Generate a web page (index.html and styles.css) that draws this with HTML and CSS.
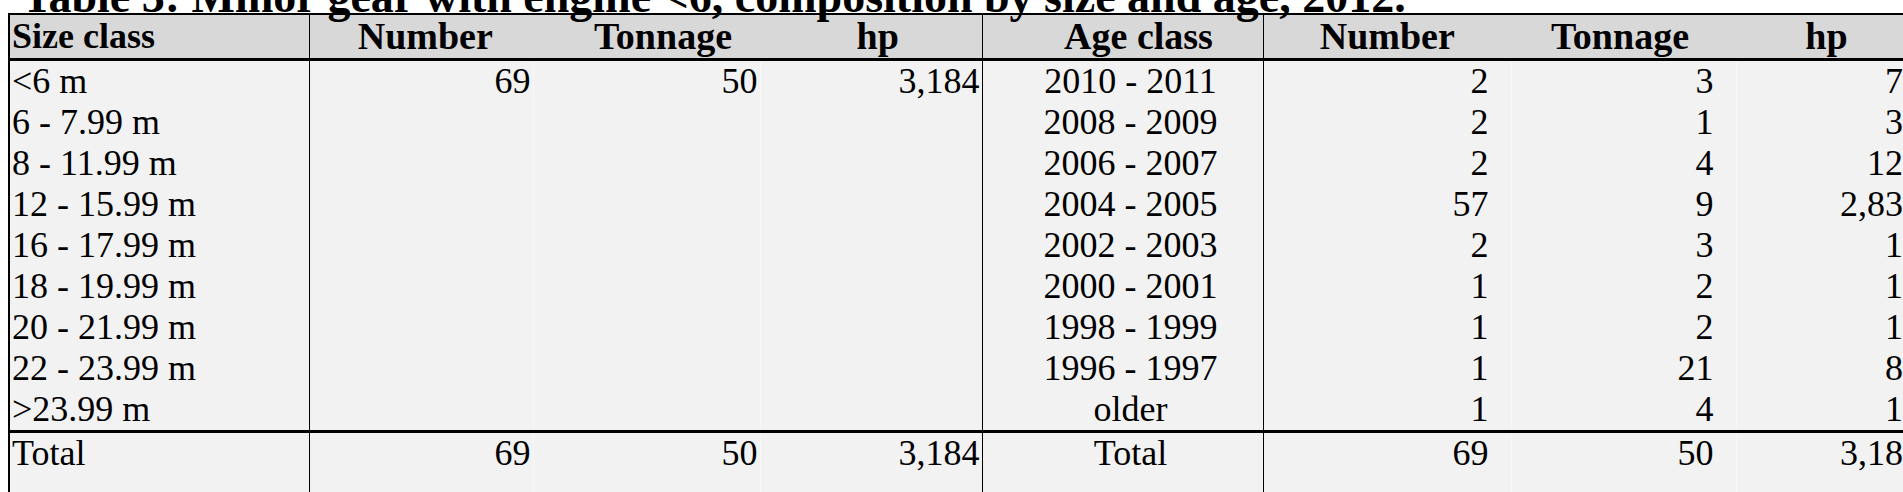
FILE: index.html
```html
<!DOCTYPE html>
<html lang="en">
<head>
  <meta charset="UTF-8" />
  <meta name="viewport" content="width=device-width, initial-scale=1.0" />
  <title>Table 3: Minor gear with engine &lt;6</title>
  <link rel="stylesheet" href="styles.css">
</head>
<body>
  <main class="sheet">
    <h1 class="sheet-title">Table 3: Minor gear with engine &lt;6, composition by size and age, 2012.</h1>

    <table class="fleet">
      <colgroup>
        <col class="c-size">
        <col class="c-num">
        <col class="c-ton">
        <col class="c-hp">
        <col class="c-age">
        <col class="c-num2">
        <col class="c-ton2">
        <col class="c-hp2">
      </colgroup>
      <thead>
        <tr>
          <th class="lbl">Size class</th>
          <th class="h-num">Number</th>
          <th class="h-ton">Tonnage</th>
          <th class="h-hp">hp</th>
          <th class="age h-age">Age class</th>
          <th class="h-num2">Number</th>
          <th class="h-ton2">Tonnage</th>
          <th class="h-hp2">hp</th>
        </tr>
      </thead>
      <tbody>
        <tr><td class="lbl">&lt;6 m</td><td class="n">69</td><td class="n">50</td><td class="n end">3,184</td><td class="age">2010 - 2011</td><td class="n gap">2</td><td class="n gap">3</td><td class="n">76</td></tr>
        <tr><td class="lbl">6 - 7.99 m</td><td class="n"></td><td class="n"></td><td class="n end"></td><td class="age">2008 - 2009</td><td class="n gap">2</td><td class="n gap">1</td><td class="n">31</td></tr>
        <tr><td class="lbl">8 - 11.99 m</td><td class="n"></td><td class="n"></td><td class="n end"></td><td class="age">2006 - 2007</td><td class="n gap">2</td><td class="n gap">4</td><td class="n">122</td></tr>
        <tr><td class="lbl">12 - 15.99 m</td><td class="n"></td><td class="n"></td><td class="n end"></td><td class="age">2004 - 2005</td><td class="n gap">57</td><td class="n gap">9</td><td class="n">2,830</td></tr>
        <tr><td class="lbl">16 - 17.99 m</td><td class="n"></td><td class="n"></td><td class="n end"></td><td class="age">2002 - 2003</td><td class="n gap">2</td><td class="n gap">3</td><td class="n">16</td></tr>
        <tr><td class="lbl">18 - 19.99 m</td><td class="n"></td><td class="n"></td><td class="n end"></td><td class="age">2000 - 2001</td><td class="n gap">1</td><td class="n gap">2</td><td class="n">16</td></tr>
        <tr><td class="lbl">20 - 21.99 m</td><td class="n"></td><td class="n"></td><td class="n end"></td><td class="age">1998 - 1999</td><td class="n gap">1</td><td class="n gap">2</td><td class="n">16</td></tr>
        <tr><td class="lbl">22 - 23.99 m</td><td class="n"></td><td class="n"></td><td class="n end"></td><td class="age">1996 - 1997</td><td class="n gap">1</td><td class="n gap">21</td><td class="n">82</td></tr>
        <tr><td class="lbl">&gt;23.99 m</td><td class="n"></td><td class="n"></td><td class="n end"></td><td class="age">older</td><td class="n gap">1</td><td class="n gap">4</td><td class="n">16</td></tr>
      </tbody>
      <tfoot>
        <tr><td class="lbl">Total</td><td class="n">69</td><td class="n">50</td><td class="n end">3,184</td><td class="age">Total</td><td class="n gap">69</td><td class="n gap">50</td><td class="n">3,184</td></tr>
      </tfoot>
    </table>
  </main>
</body>
</html>
```

FILE: styles.css
```css
:root {
  --ink: #000;
  --head: #d8d8d8;
  --cell: #f2f2f2;
  --tick: #f8f8f8;
}

* { box-sizing: border-box; }

html { overflow: hidden; }

body {
  margin: 0;
  background: #fff;
  color: var(--ink);
  font-family: "Liberation Serif", "Times New Roman", serif;
}

.sheet {
  padding-left: 8px;
}

.sheet-title {
  margin: -20px 0 0;
  padding-left: 14px;
  height: 33px;
  font-size: 46px;
  line-height: 34px;
  font-weight: 700;
  white-space: nowrap;
}

.fleet {
  table-layout: fixed;
  width: 1915px;
  border-collapse: collapse;
  border: 2px solid var(--ink);
  font-size: 36px;
}

/* column widths follow the grid lines of the original sheet */
.c-size { width: 300px; }
.c-num  { width: 224px; }
.c-ton  { width: 227px; }
.c-hp   { width: 222px; }
.c-age  { width: 281px; }
.c-num2 { width: 248px; }
.c-ton2 { width: 225px; }
.c-hp2  { width: 188px; }

.fleet th,
.fleet td {
  padding: 0 2px;
  white-space: nowrap;
  overflow: hidden;
}

.fleet th {
  height: 45px;
  line-height: 42px;
  background: var(--head);
  font-size: 38px;
  font-weight: 700;
  text-align: center;
  border-bottom: 3px solid var(--ink);
}

.fleet td {
  height: 41px;
  line-height: 41px;
  background: var(--cell);
  font-weight: 400;
}

/* thin light separators between numeric columns */
.fleet .n { text-align: right; border-left: 1px solid var(--tick); }

.fleet .lbl { text-align: left; border-right: 1px solid var(--ink); }
.fleet .end { border-right: 1px solid var(--ink); }
.fleet .age { text-align: center; padding-left: 18px; border-right: 1px solid var(--ink); border-left: 1px solid var(--ink); }
.fleet .gap { padding-right: 22px; }

.fleet th.lbl { text-align: left; font-size: 36px; }
.fleet .h-num  { padding-left: 10px; }
.fleet .h-ton  { padding-left: 35px; }
.fleet .h-hp   { padding-left: 16px; border-right: 1px solid var(--ink); }
.fleet .h-age  { padding-left: 34px; }
.fleet .h-ton2 { padding-right: 9px; }
.fleet .h-hp2  { padding-right: 8px; }

.fleet tfoot td {
  border-top: 3px solid var(--ink);
  height: 90px;
  vertical-align: top;
}
```
